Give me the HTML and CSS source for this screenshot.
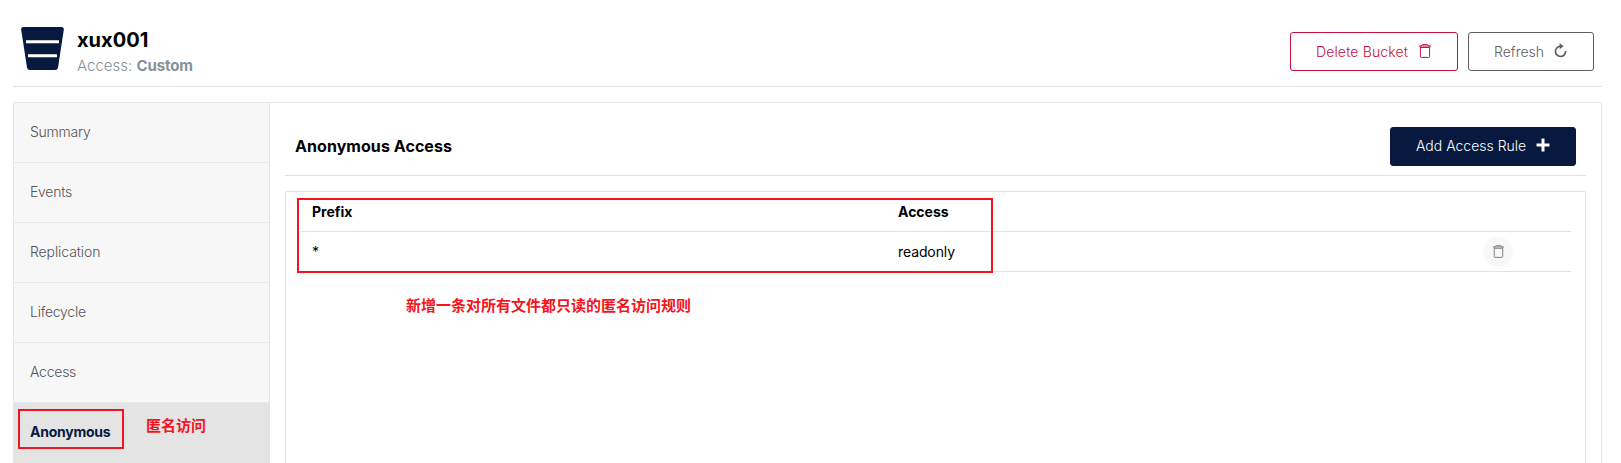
FILE: index.html
```html
<!DOCTYPE html>
<html lang="en">
<head>
<meta charset="utf-8">
<title>xux001</title>
<link rel="stylesheet" href="styles.css">
</head>
<body>
<svg class="defs" aria-hidden="true">
  <symbol id="trash" viewBox="0 0 12 14">
    <path d="M0 2H12M1.400 2V12.500Q1.400 13.400 2.300 13.400H9.700Q10.600 13.400 10.600 12.500V2M2 3.500H10M2.500 2Q2.700 .6 3.600 .6H8.400Q9.300 .6 9.500 2" fill="none" stroke="currentColor" stroke-width="1"/>
  </symbol>
</svg>
<header class="page-header">
  <svg class="bucket" viewBox="0 0 43 43">
    <path d="M2.500 0H40.500Q43.200 0 42.800 2.700L37 40.500Q36.600 43 34 43H9Q6.400 43 6 40.500L.2 2.700Q-.2 0 2.500 0Z" fill="#07193e"/>
    <path d="M5 14.800H38M7 28.800H36" stroke="#fff" stroke-width="3"/>
  </svg>
  <div class="titles">
    <h1>xux001</h1>
    <p>Access: <b>Custom</b></p>
  </div>
  <button class="btn delete"><span>Delete Bucket</span><svg class="i-trash"><use href="#trash"/></svg></button>
  <button class="btn refresh"><span>Refresh</span><svg class="i-refresh" viewBox="0 0 13 15"><path d="M7 3.300A5.100 5.100 0 1 0 11.600 8" fill="none" stroke="currentColor" stroke-width="1.700"/><path d="M5.600 0L9.600 3.200L5.600 6.200Z" fill="currentColor"/></svg></button>
</header>
<main class="panel">
  <nav class="tabs">
    <a class="tab">Summary</a>
    <a class="tab">Events</a>
    <a class="tab">Replication</a>
    <a class="tab">Lifecycle</a>
    <a class="tab">Access</a>
    <a class="tab active">Anonymous</a>
  </nav>
  <section class="content">
    <div class="section-header">
      <h2>Anonymous Access</h2>
      <button class="btn add"><span>Add Access Rule</span><svg class="i-plus" viewBox="0 0 14 14"><path d="M7 .5V13.500M.5 7H13.500" stroke="currentColor" stroke-width="3"/></svg></button>
    </div>
    <div class="table">
      <div class="row head"><span>Prefix</span><span>Access</span></div>
      <div class="row"><span>*</span><span class="value">readonly</span><button class="round"><svg class="i-small"><use href="#trash"/></svg></button></div>
    </div>
  </section>
</main>
<div class="mark mark-table"></div>
<div class="mark mark-tab"></div>
<div class="note note-table">新增一条对所有文件都只读的匿名访问规则</div>
<div class="note note-tab">匿名访问</div>
</body>
</html>
```
FILE: styles.css
```css
* { box-sizing: border-box; }
html, body { height: 100%; overflow: hidden; }
body {
  display: flex;
  flex-direction: column;
  margin: 0;
  padding: 0 19px 0 13px;
  background: #fff;
  color: #000;
  font: 14px/20px Inter, "Noto Sans CJK SC", sans-serif;
}
h1, h2, p { margin: 0; }
.defs { position: absolute; width: 0; height: 0; }

.page-header {
  display: flex;
  flex: none;
  align-items: flex-start;
  height: 87px;
  padding: 27px 8px 0;
  border-bottom: 1px solid #e2e2e2;
}
.bucket { width: 43px; height: 43px; }
.titles { flex: 1; margin-left: 13px; }
h1 { font-size: 20px; line-height: 26px; font-weight: 700; }
.titles p { padding-top: 1px; font-size: 15px; line-height: 24px; color: #87909b; font-weight: 300; }
.titles b { font-weight: 700; letter-spacing: -.1px; }

.btn {
  display: flex;
  align-items: center;
  height: 39px;
  padding: 0 0 0 25px;
  border: 1px solid;
  border-radius: 3px;
  background: #fff;
  font: 300 14px/20px Inter, sans-serif;
}
.btn svg { flex: none; }
.page-header .btn { margin-top: 5px; }
.delete { width: 168px; color: #c8103e; letter-spacing: .14px; }
.refresh { width: 126px; margin-left: 10px; color: #5e5e5e; }
.add { width: 186px; background: #07193e; border-color: #07193e; color: #fff; }
.i-trash { width: 12px; height: 14px; margin: -2px 0 0 11px; }
.i-refresh { width: 13px; height: 15px; margin: -2px 0 0 10px; }
.i-plus { width: 14px; height: 14px; margin: -2px 0 0 10px; }

.panel {
  display: flex;
  flex: 1;
  min-height: 0;
  margin-top: 15px;
  border: 1px solid #e6e6e6;
  border-bottom: 0;
  border-radius: 2px 2px 0 0;
}
.tabs { width: 256px; border-right: 1px solid #e2e2e2; background: #f7f7f7; }
.tab {
  display: flex;
  align-items: center;
  height: 60px;
  padding: 0 0 2px 16px;
  border-bottom: 1px solid #e9e9e9;
  color: #555;
  font-weight: 300;
  letter-spacing: -.25px;
}
.tab:nth-child(3) { letter-spacing: -.1px; }
.tab.active { background: #e4e4e4; border-bottom: 0; color: #07193e; font-weight: 700; }

.content { display: flex; flex: 1; flex-direction: column; padding: 0 15px; }
.section-header {
  display: flex;
  flex: none;
  align-items: center;
  justify-content: space-between;
  height: 73px;
  padding: 14px 10px 0;
  border-bottom: 1px solid #e2e2e2;
}
h2 { font-size: 16px; line-height: 20px; font-weight: 700; letter-spacing: .06px; }
.table {
  flex: 1;
  margin-top: 15px;
  padding: 0 14px 0 15px;
  border: 1px solid #e2e2e2;
  border-bottom: 0;
  border-radius: 2px 2px 0 0;
}
.row {
  display: grid;
  grid-template-columns: 586px 585px 30px;
  align-items: center;
  height: 40px;
  padding-left: 11px;
  border-bottom: 1px solid #e2e2e2;
}
.head { font-weight: 700; }
.value { letter-spacing: -.1px; }
.round {
  display: flex;
  align-items: center;
  justify-content: center;
  width: 30px;
  height: 30px;
  padding: 0;
  border: 0;
  border-radius: 50%;
  background: #f8f8f8;
  color: #777;
}
.i-small { width: 11px; height: 13px; }

.mark { position: absolute; border: 2px solid #f0141e; }
.mark-table { left: 297px; top: 198px; width: 696px; height: 75px; }
.mark-tab { left: 18px; top: 409px; width: 106px; height: 40px; }
.note { position: absolute; color: #f5141e; font: 700 15px/20px "Noto Sans CJK SC", sans-serif; white-space: nowrap; }
.note-table { left: 406px; top: 295px; }
.note-tab { left: 146px; top: 415px; }
```
